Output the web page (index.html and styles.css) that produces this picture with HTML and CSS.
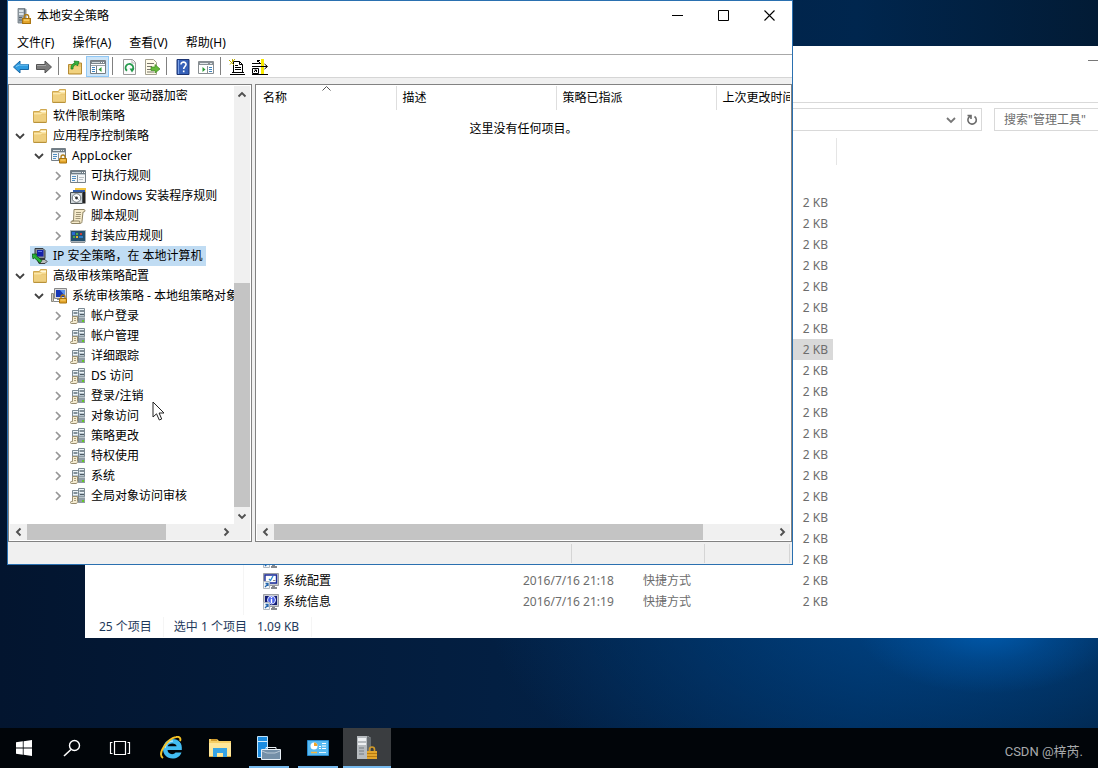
FILE: index.html
```html
<!DOCTYPE html>
<html lang="zh-CN">
<head>
<meta charset="utf-8">
<meta name="viewport" content="width=device-width, initial-scale=1">
<title>本地安全策略</title>
<link rel="stylesheet" href="styles.css">
</head>
<body>
<svg class="sprite" aria-hidden="true">
  <symbol id="folder" viewBox="0 0 16 16">
    <path d="M1.500 3.500h6l1-2h6v12.500h-13z" fill="#ecca78" stroke="#cfa850"/>
    <path d="M9 2.500h5v1.500H8z" fill="#fff8dc"/>
    <path d="M2 5h7l1-1h4v1.500h-4l-1 1H2z" fill="#fbe7a8"/>
    <path d="M2 7h12v6.500H2z" fill="#efd080"/>
    <path d="M1.500 14.500h13" stroke="#b8923a"/>
  </symbol>
  <symbol id="lock" viewBox="0 0 8 9">
    <path d="M2 4V2.500a2 2 0 0 1 4 0V4" fill="none" stroke="#b07c16" stroke-width="1.300"/>
    <path d="M.5 4h7v4.500h-7z" fill="#e3a52c" stroke="#a8720c"/>
    <path d="M1.500 5.500h5" stroke="#ffd873"/>
  </symbol>
  <symbol id="tower-lock" viewBox="0 0 16 16">
    <path d="M2 .5h7l1 1V15H2z" fill="#9aa4ac" stroke="#6e7880" stroke-width=".8"/>
    <path d="M3 2h4.500v2H3zM3 5h4.500v2H3z" fill="#dbe3e8"/>
    <path d="M3 9.500h3M3 12h3" stroke="#58636c"/>
    <path d="M8.500 1v14" stroke="#68727a"/>
    <use href="#lock" x="6" y="6" width="9" height="10"/>
  </symbol>
  <symbol id="panel" viewBox="0 0 16 16">
    <path d="M.5 2.500h15v12H.5z" fill="#f4f6f7" stroke="#757f86"/>
    <path d="M1 3h14v3H1z" fill="#6f7c86"/>
    <path d="M2 4.500h9" stroke="#cbd4da"/><path d="M12 4.500h1M14 4.500h1" stroke="#fff"/>
    <path d="M1 6.500h14" stroke="#c2cbd1"/>
    <path d="M2 8.500h4M2 10.500h4M2 12.500h3" stroke="#4f8fc5"/>
    <path d="M7.500 7v7" stroke="#88939b"/>
    <path d="M9 9.500h5M9 11.500h4" stroke="#b9c0c5"/>
  </symbol>
  <symbol id="panel-lock" viewBox="0 0 16 16">
    <path d="M.5.500h14v12H.5z" fill="#f4f6f7" stroke="#757f86"/>
    <path d="M1 1h13v3H1z" fill="#6f7c86"/>
    <path d="M2 2.500h7M10 2.500h1M12 2.500h1" stroke="#dfe5e9"/>
    <path d="M1 4.500h13" stroke="#c2cbd1"/>
    <path d="M2 6.500h4M2 8.500h4M2 10.500h3" stroke="#4f8fc5"/>
    <path d="M7.500 5v7" stroke="#88939b"/>
    <use href="#lock" x="8" y="6" width="8" height="10"/>
  </symbol>
  <symbol id="installer" viewBox="0 0 16 16">
    <path d="M5 0h11v4H5z" fill="#f3c53b"/><path d="M3 2h12v3H3z" fill="#2f59a8"/>
    <path d="M.5 4.500h12v11H.5z" fill="#cfd5d9" stroke="#4c5358"/>
    <path d="M13 4h2.500v11.500H13z" fill="#222"/>
    <circle cx="6.500" cy="10" r="4.300" fill="#fff" stroke="#6f777c"/>
    <path d="M6.500 10 3.500 7.500M6.500 10l3 2.500" stroke="#a7b5bd"/>
    <circle cx="6.500" cy="10" r="1.400" fill="#333"/>
  </symbol>
  <symbol id="script" viewBox="0 0 16 16">
    <path d="M4 1.500h10c1 0 1.500 2 0 2.500h-1l-1 9.500c0 1.500-1 2-2 2H2c-1.500 0-1.500-2.500 0-2.500h1.500z" fill="#f6ebcb" stroke="#8f8465"/>
    <path d="M6 4.500h5M6 6.500h5M5.500 8.500h5M5.500 10.500h5" stroke="#a09577"/>
    <path d="M2 13h7.500l.5 2" fill="none" stroke="#8f8465"/>
  </symbol>
  <symbol id="packaged" viewBox="0 0 16 16">
    <path d="M.5 2.500h15v11H.5z" fill="#24506e" stroke="#a9b2b8"/>
    <path d="M2 4h3v3H2z" fill="#276bd1"/><path d="M6 5h2v2H6z" fill="#45ad4b"/><path d="M10 5h2v2h-2z" fill="#c8403a"/>
    <path d="M3 8h2v2H3z" fill="#43a94c"/><path d="M6 8h2v2H6z" fill="#e3b62d"/><path d="M9 8h4v2H9z" fill="#2c79c5"/>
    <path d="M1 14.500h14" stroke="#858e94"/>
  </symbol>
  <symbol id="ipsec" viewBox="0 0 16 16">
    <path d="M3 .5h8l2 2v8H4L3 9z" fill="#8b8f94" stroke="#34383c"/>
    <path d="M5 2h6.500v6.500H5z" fill="#1420a8"/><path d="M6 3.500h4" stroke="#5f76e8"/>
    <path d="M5 11.500h8l2 2-2 2H7z" fill="#b9bcbe" stroke="#393c3e"/>
    <path d="M0 6h5L4 7.500l6 5-2 2.500-5.500-5L1 11z" fill="#26b336" stroke="#064c12" stroke-width=".7"/>
  </symbol>
  <symbol id="audit-root" viewBox="0 0 16 16">
    <path d="M.5 5.500h2v8h-2z" fill="#d0cdc2" stroke="#8b897f"/><path d="M3.500.5h12v10h-12z" fill="#dadada" stroke="#898989"/>
    <path d="M5 2h9v7H5z" fill="#1638b7"/><path d="M9 2h5v6z" fill="#5b92ec"/>
    <path d="M6 11.500h4M3 13.500h6" stroke="#85898c"/>
    <use href="#lock" x="8" y="6" width="8" height="10"/>
  </symbol>
  <symbol id="servers" viewBox="0 0 16 16">
    <path d="M2.500 2.500h6v9h-6z" fill="#b6c4cd" stroke="#7c8a93"/>
    <path d="M8.500.500h6v14h-6z" fill="#b6c4cd" stroke="#7c8a93"/>
    <path d="M3 3.500h5M9 1.500h5M9 4.500h5M3 6.500h5" stroke="#eef5f8"/>
    <path d="M4 5h3M10 3h4M10 6.500h4" stroke="#4d5a63"/>
    <path d="M9 8h6v7H9z" fill="#8f9ca4"/>
    <path d="M9 9.500h6" stroke="#b9c4ca"/>
    <path d="M2.500 8.500h5v5c0 1.300-.6 2-1.500 2H1.200c-1 0-1-2 0-2h1.300z" fill="#f5ecd2" stroke="#998e70"/>
    <path d="M4 10.500h2M4 12.500h2" stroke="#a89d7d"/>
    <path d="M12 12h2v2h-2z" fill="#65c928"/>
  </symbol>
  <symbol id="tri-down" viewBox="0 0 10 10"><path d="m1 3 4 4 4-4" fill="none" stroke="#404040" stroke-width="1.800"/></symbol>
  <symbol id="tri-right" viewBox="0 0 10 10"><path d="m3 1 4 4-4 4" fill="none" stroke="#969696" stroke-width="1.700"/></symbol>
  <symbol id="bar-arrow" viewBox="0 0 10 10"><path d="M6.500 1.500 3 5l3.500 3.500" fill="none" stroke="#505050" stroke-width="1.900"/></symbol>
  <symbol id="msconfig" viewBox="0 0 16 16">
    <path d="M.5.5h15v12H.5z" fill="#c9cbd0" stroke="#9b9da3"/><path d="M2 2h11.500v8H2z" fill="#fff" stroke="#1a2b9a" stroke-width="1.400"/>
    <path d="m6 6 1.500 1.500L10 3" fill="none" stroke="#2e8bd2" stroke-width="1.300"/><path d="M10 7.500h2.500" stroke="#888"/>
    <path d="M9 13h3v1h2v2H8v-2h1z" fill="#85878c"/>
    <path d="M.5 8.500h6v7h-6z" fill="#f3f6f9" stroke="#b1b8bf"/><path d="m2 14 3-3M2.500 10.500H5V13" fill="none" stroke="#2466ad" stroke-width="1.300"/>
  </symbol>
  <symbol id="msinfo" viewBox="0 0 16 16">
    <path d="M.5.5h15v12H.5z" fill="#c9cbd0" stroke="#9b9da3"/><path d="M2 2h12v9H2z" fill="#111b73"/>
    <circle cx="8.500" cy="6" r="4" fill="#4d64ea" stroke="#dfe5ff"/><path d="M8.500 5v4M8.500 3v1.200" stroke="#fff" stroke-width="1.400"/>
    <path d="M9 13h3v1h2v2H8v-2h1z" fill="#85878c"/>
    <path d="M.5 8.500h6v7h-6z" fill="#f3f6f9" stroke="#b1b8bf"/><path d="m2 14 3-3M2.500 10.500H5V13" fill="none" stroke="#2466ad" stroke-width="1.300"/>
  </symbol>
</svg>

<div class="desktop">
  <main class="workspace">

    <section class="explorer" aria-label="管理工具">
      <header class="explorer-title">
        <button class="explorer-min" type="button" aria-label="最小化"><svg width="10" height="10" viewBox="0 0 10 10"><path d="M0 5.500h10" stroke="#777"/></svg></button>
      </header>
      <div class="address-row">
        <div class="address-box">
          <button class="address-btn" type="button" aria-label="历史记录"><svg width="10" height="10" viewBox="0 0 10 10"><path d="m1 3 4 4 4-4" fill="none" stroke="#777" stroke-width="1.800"/></svg></button>
          <button class="address-btn refresh" type="button" aria-label="刷新"><svg width="12" height="12" viewBox="0 0 12 12"><path d="M4 2.300a4.200 4.200 0 1 0 4.500.2M1.500 1.500h3.500V5" fill="none" stroke="#6b6b6b" stroke-width="1.600"/></svg></button>
        </div>
        <input class="search" type="text" aria-label="搜索" placeholder="搜索&quot;管理工具&quot;">
      </div>
      <div class="explorer-body">
        <div class="nav-pane"></div>
        <div class="file-list">
          <div class="file-head"></div>
          <table class="files">
            <colgroup><col class="c-name"><col class="c-date"><col class="c-type"><col class="c-size"></colgroup>
            <tbody>
              <tr><td></td><td></td><td></td><td>2 KB</td></tr>
              <tr><td></td><td></td><td></td><td>2 KB</td></tr>
              <tr><td></td><td></td><td></td><td>2 KB</td></tr>
              <tr><td></td><td></td><td></td><td>2 KB</td></tr>
              <tr><td></td><td></td><td></td><td>2 KB</td></tr>
              <tr><td></td><td></td><td></td><td>2 KB</td></tr>
              <tr><td></td><td></td><td></td><td>2 KB</td></tr>
              <tr class="picked"><td></td><td></td><td></td><td>2 KB</td></tr>
              <tr><td></td><td></td><td></td><td>2 KB</td></tr>
              <tr><td></td><td></td><td></td><td>2 KB</td></tr>
              <tr><td></td><td></td><td></td><td>2 KB</td></tr>
              <tr><td></td><td></td><td></td><td>2 KB</td></tr>
              <tr><td></td><td></td><td></td><td>2 KB</td></tr>
              <tr><td></td><td></td><td></td><td>2 KB</td></tr>
              <tr><td></td><td></td><td></td><td>2 KB</td></tr>
              <tr><td></td><td></td><td></td><td>2 KB</td></tr>
              <tr><td></td><td></td><td></td><td>2 KB</td></tr>
              <tr><td><span class="file"><svg class="i16"><use href="#msinfo"/></svg></span></td><td></td><td></td><td>2 KB</td></tr>
              <tr><td><span class="file"><svg class="i16"><use href="#msconfig"/></svg>系统配置</span></td><td>2016/7/16 21:18</td><td>快捷方式</td><td>2 KB</td></tr>
              <tr><td><span class="file"><svg class="i16"><use href="#msinfo"/></svg>系统信息</span></td><td>2016/7/16 21:19</td><td>快捷方式</td><td>2 KB</td></tr>
              <tr><td><span class="file"><svg class="i16" viewBox="0 0 16 16"><circle cx="8" cy="7.500" r="7.500" fill="#8b8b8b"/></svg></span></td><td></td><td></td><td></td></tr>
            </tbody>
          </table>
        </div>
      </div>
      <footer class="explorer-status"><span>25 个项目</span><span class="picked-info">选中 1 个项目</span><span class="picked-size">1.09 KB</span></footer>
    </section>

    <section class="policy" aria-label="本地安全策略">
      <header class="titlebar">
        <svg class="i16"><use href="#tower-lock"/></svg>
        <h1 class="title">本地安全策略</h1>
        <button class="cap" type="button" aria-label="最小化"><svg width="11" height="11" viewBox="0 0 11 11"><path d="M0 5.500h11" stroke="#000"/></svg></button>
        <button class="cap" type="button" aria-label="最大化"><svg width="11" height="11" viewBox="0 0 11 11"><path d="M.5.500h10v10H.5z" fill="none" stroke="#000"/></svg></button>
        <button class="cap" type="button" aria-label="关闭"><svg width="11" height="11" viewBox="0 0 11 11"><path d="m.5.500 10 10M10.500.500l-10 10" stroke="#000" stroke-width="1.100"/></svg></button>
      </header>
      <nav class="menubar">
        <button type="button">文件(F)</button><button type="button">操作(A)</button><button type="button">查看(V)</button><button type="button">帮助(H)</button>
      </nav>
      <div class="toolbar">
        <button class="tool" type="button" aria-label="后退"><svg width="16" height="14" viewBox="0 0 16 14"><path d="M.5 7 7 1v3.500h8.500v5H7V13z" fill="#2f9be0" stroke="#1767a5"/><path d="M3 6.500 6.500 5H15" fill="none" stroke="#7fcbf5"/></svg></button>
        <button class="tool" type="button" aria-label="前进"><svg width="16" height="14" viewBox="0 0 16 14"><path d="M15.500 7 9 1v3.500H.5v5H9V13z" fill="#7b7b7b" stroke="#525252"/><path d="M1 5.500h9" stroke="#a4a4a4"/></svg></button>
        <span class="tool-sep"></span>
        <button class="tool" type="button" aria-label="上一级"><svg width="16" height="16" viewBox="0 0 16 16"><path d="M1.500 5.500h5l1-1.500h7v11h-13z" fill="#e9c56c" stroke="#b58a33"/><path d="M2 8h12v6H2z" fill="#f1d27f"/><path d="M4 10c0-4 1-5 4-6L7 2l5 .5L10.500 7 9 5.500C6.500 6 6 8 6 10z" fill="#35b33c" stroke="#14751c" stroke-width=".7"/></svg></button>
        <button class="tool on" type="button" aria-label="显示控制台树"><svg width="16" height="16" viewBox="0 0 16 16"><path d="M.5 1.500h15v13H.5z" fill="#fff" stroke="#777d82"/><path d="M1 2h14v3H1z" fill="#7d868c"/><path d="M2 3.500h8" stroke="#d4dadd"/><path d="M11 3.500h1M13 3.500h1" stroke="#fff"/><path d="M1 6.500h14" stroke="#9ba2a7"/><path d="M2 8.500h3M2 10.500h3M2 12.500h3" stroke="#3d83c0"/><path d="M6.500 7v7" stroke="#777d82"/><path d="M11.500 8v5L8.500 10.500z" fill="#299b34"/></svg></button>
        <span class="tool-sep"></span>
        <button class="tool" type="button" aria-label="刷新"><svg width="16" height="16" viewBox="0 0 16 16"><path d="M2.500.5h9l3 3v12h-12z" fill="#fcfcfc" stroke="#9b9b9b"/><path d="M11 1v3h3" fill="none" stroke="#b5b5b5"/><path d="M6 11.800A3.800 3.800 0 1 1 11.500 11" fill="none" stroke="#249a4c" stroke-width="1.900"/><path d="m8.500 9.500 5 0-2.500 4z" fill="#249a4c"/></svg></button>
        <button class="tool" type="button" aria-label="导出列表"><svg width="16" height="16" viewBox="0 0 16 16"><path d="M1.500.5h8l3 3v12h-11z" fill="#fffbe9" stroke="#a2a08f"/><path d="M3 4.500h7M3 7.500h5M3 10.500h4M3 13h7" stroke="#77756b"/><path d="M7 8h4V5.500L16 10l-5 4v-2.500H7z" fill="#65b93a" stroke="#3c8b20" stroke-width=".7"/></svg></button>
        <span class="tool-sep"></span>
        <button class="tool" type="button" aria-label="帮助"><svg width="16" height="16" viewBox="0 0 16 16"><path d="M2 .5h12v15H2z" fill="#3560b8" stroke="#1c3472"/><path d="M3.500 1v14" stroke="#7aa0e6"/><path d="M6 5.500c0-3.500 5.500-3 5 .2C10.700 7.500 8.700 7.700 8.700 10M8.700 11.500v1.700" fill="none" stroke="#fff" stroke-width="1.600"/></svg></button>
        <button class="tool" type="button" aria-label="显示操作窗格"><svg width="16" height="16" viewBox="0 0 16 16"><path d="M.5 2.500h15v12H.5z" fill="#fff" stroke="#888e92"/><path d="M1 3h14v3H1z" fill="#899196"/><path d="M2 4.500h8M12 4.500h2" stroke="#e2e6e8"/><path d="M9.500 7v7" stroke="#888e92"/><path d="M11 8.500h3M11 10.500h3M11 12.500h3" stroke="#4386bd"/><path d="M4.500 8v5L7.500 10.500z" fill="#299b34"/></svg></button>
        <span class="tool-sep"></span>
        <button class="tool" type="button" aria-label="创建 IP 安全策略"><svg width="16" height="16" viewBox="0 0 16 16"><path d="M4.500 2.500h6l3 3v8h-9z" fill="#fff" stroke="#000"/><path d="M10.500 2.500v3h3M6 6.500h3M6 8.500h6M6 10.500h6M3 13.500h12M1 15.500h15" fill="none" stroke="#000"/><path d="m0 1 5 5M6 0 1 5.500M3.500 0v3" stroke="#b9a900"/></svg></button>
        <button class="tool" type="button" aria-label="管理 IP 筛选器"><svg width="16" height="16" viewBox="0 0 16 16"><path d="M9 0h3v15H9z" fill="#f8ea00"/><path d="M0 4.500h8M0 7.500h15M0 15.500h16M12.500 5l3 2.500-3 2.500" fill="none" stroke="#000"/><path d="M.5 9.500h6v5h-6z" fill="#fff" stroke="#000"/><path d="m2 13 2-2M2.500 11h2v2M5 1.500h3M5.500 1v2M6 2l3 3" fill="none" stroke="#000"/></svg></button>
      </div>

      <div class="panes">
        <div class="pane tree-pane">
          <div class="tree-view">
            <ul class="tree">
              <li>
                <ul>
                  <li><div class="row"><span class="tw"></span><span class="node"><svg class="i16"><use href="#folder"/></svg>BitLocker 驱动器加密</span></div></li>
                </ul>
              </li>
              <li><div class="row"><span class="tw"></span><span class="node"><svg class="i16"><use href="#folder"/></svg>软件限制策略</span></div></li>
              <li>
                <div class="row"><button class="tw" type="button" aria-label="折叠"><svg class="i10"><use href="#tri-down"/></svg></button><span class="node"><svg class="i16"><use href="#folder"/></svg>应用程序控制策略</span></div>
                <ul>
                  <li>
                    <div class="row"><button class="tw" type="button" aria-label="折叠"><svg class="i10"><use href="#tri-down"/></svg></button><span class="node"><svg class="i16"><use href="#panel-lock"/></svg>AppLocker</span></div>
                    <ul>
                      <li><div class="row"><button class="tw" type="button" aria-label="展开"><svg class="i10"><use href="#tri-right"/></svg></button><span class="node"><svg class="i16"><use href="#panel"/></svg>可执行规则</span></div></li>
                      <li><div class="row"><button class="tw" type="button" aria-label="展开"><svg class="i10"><use href="#tri-right"/></svg></button><span class="node"><svg class="i16"><use href="#installer"/></svg>Windows 安装程序规则</span></div></li>
                      <li><div class="row"><button class="tw" type="button" aria-label="展开"><svg class="i10"><use href="#tri-right"/></svg></button><span class="node"><svg class="i16"><use href="#script"/></svg>脚本规则</span></div></li>
                      <li><div class="row"><button class="tw" type="button" aria-label="展开"><svg class="i10"><use href="#tri-right"/></svg></button><span class="node"><svg class="i16"><use href="#packaged"/></svg>封装应用规则</span></div></li>
                    </ul>
                  </li>
                </ul>
              </li>
              <li><div class="row"><span class="tw"></span><span class="node selected"><svg class="i16"><use href="#ipsec"/></svg>IP 安全策略，在 本地计算机</span></div></li>
              <li>
                <div class="row"><button class="tw" type="button" aria-label="折叠"><svg class="i10"><use href="#tri-down"/></svg></button><span class="node"><svg class="i16"><use href="#folder"/></svg>高级审核策略配置</span></div>
                <ul>
                  <li>
                    <div class="row"><button class="tw" type="button" aria-label="折叠"><svg class="i10"><use href="#tri-down"/></svg></button><span class="node"><svg class="i16"><use href="#audit-root"/></svg>系统审核策略 - 本地组策略对象</span></div>
                    <ul>
                      <li><div class="row"><button class="tw" type="button" aria-label="展开"><svg class="i10"><use href="#tri-right"/></svg></button><span class="node"><svg class="i16"><use href="#servers"/></svg>帐户登录</span></div></li>
                      <li><div class="row"><button class="tw" type="button" aria-label="展开"><svg class="i10"><use href="#tri-right"/></svg></button><span class="node"><svg class="i16"><use href="#servers"/></svg>帐户管理</span></div></li>
                      <li><div class="row"><button class="tw" type="button" aria-label="展开"><svg class="i10"><use href="#tri-right"/></svg></button><span class="node"><svg class="i16"><use href="#servers"/></svg>详细跟踪</span></div></li>
                      <li><div class="row"><button class="tw" type="button" aria-label="展开"><svg class="i10"><use href="#tri-right"/></svg></button><span class="node"><svg class="i16"><use href="#servers"/></svg>DS 访问</span></div></li>
                      <li><div class="row"><button class="tw" type="button" aria-label="展开"><svg class="i10"><use href="#tri-right"/></svg></button><span class="node"><svg class="i16"><use href="#servers"/></svg>登录/注销</span></div></li>
                      <li><div class="row"><button class="tw" type="button" aria-label="展开"><svg class="i10"><use href="#tri-right"/></svg></button><span class="node"><svg class="i16"><use href="#servers"/></svg>对象访问</span></div></li>
                      <li><div class="row"><button class="tw" type="button" aria-label="展开"><svg class="i10"><use href="#tri-right"/></svg></button><span class="node"><svg class="i16"><use href="#servers"/></svg>策略更改</span></div></li>
                      <li><div class="row"><button class="tw" type="button" aria-label="展开"><svg class="i10"><use href="#tri-right"/></svg></button><span class="node"><svg class="i16"><use href="#servers"/></svg>特权使用</span></div></li>
                      <li><div class="row"><button class="tw" type="button" aria-label="展开"><svg class="i10"><use href="#tri-right"/></svg></button><span class="node"><svg class="i16"><use href="#servers"/></svg>系统</span></div></li>
                      <li><div class="row"><button class="tw" type="button" aria-label="展开"><svg class="i10"><use href="#tri-right"/></svg></button><span class="node"><svg class="i16"><use href="#servers"/></svg>全局对象访问审核</span></div></li>
                    </ul>
                  </li>
                </ul>
              </li>
            </ul>
          </div>
          <div class="bar vertical">
            <button type="button" class="bar-btn" aria-label="向上滚动"><svg class="i10 turn-up"><use href="#bar-arrow"/></svg></button>
            <div class="track"><div class="thumb thumb-tree-y"></div></div>
            <button type="button" class="bar-btn" aria-label="向下滚动"><svg class="i10 turn-down"><use href="#bar-arrow"/></svg></button>
          </div>
          <div class="bar">
            <button type="button" class="bar-btn" aria-label="向左滚动"><svg class="i10"><use href="#bar-arrow"/></svg></button>
            <div class="track"><div class="thumb thumb-tree-x"></div></div>
            <button type="button" class="bar-btn" aria-label="向右滚动"><svg class="i10 turn-right"><use href="#bar-arrow"/></svg></button>
          </div>
          <div class="bar-corner"></div>
        </div>

        <div class="pane list-pane">
          <table class="policies">
            <colgroup><col class="p-name"><col class="p-wide"><col class="p-wide"><col></colgroup>
            <thead><tr>
              <th>名称<svg class="sort" width="9" height="5" viewBox="0 0 9 5"><path d="M.5 4.500l4-4 4 4" fill="none" stroke="#555"/></svg></th>
              <th>描述</th><th>策略已指派</th><th>上次更改时间</th>
            </tr></thead>
            <tbody><tr><td colspan="4">这里没有任何项目。</td></tr></tbody>
          </table>
          <div class="bar">
            <button type="button" class="bar-btn" aria-label="向左滚动"><svg class="i10"><use href="#bar-arrow"/></svg></button>
            <div class="track"><div class="thumb thumb-list-x"></div></div>
            <button type="button" class="bar-btn" aria-label="向右滚动"><svg class="i10 turn-right"><use href="#bar-arrow"/></svg></button>
          </div>
        </div>
      </div>
      <footer class="policy-status"><span></span><span></span><span></span></footer>
    </section>

    <svg class="pointer" width="13" height="20" viewBox="0 0 13 20" aria-hidden="true"><path d="M1 1v15l3.500-3.200L7.300 19l2.400-1-2.600-6H12z" fill="#fff" stroke="#222"/></svg>
  </main>

  <footer class="taskbar">
    <button class="task" type="button" aria-label="开始"><svg width="16" height="16" viewBox="0 0 16 16"><path d="M0 2.300 6.800 1.300v6.300H0zM7.600 1.200 16 0v7.600H7.600zM0 8.400h6.800v6.300L0 13.700zM7.600 8.400H16V16l-8.400-1.200z" fill="#fff"/></svg></button>
    <button class="task" type="button" aria-label="搜索"><svg width="18" height="18" viewBox="0 0 18 18"><circle cx="11.500" cy="6.500" r="5" fill="none" stroke="#fff" stroke-width="1.400"/><path d="m8 10.500-7 6.500" stroke="#fff" stroke-width="1.600"/></svg></button>
    <button class="task" type="button" aria-label="任务视图"><svg width="22" height="16" viewBox="0 0 22 16"><path d="M5.500 1.500h11v13h-11zM3.500 2.500h-2v11h2M18.500 2.500h2v11h-2" fill="none" stroke="#fff" stroke-width="1.200"/></svg></button>
    <button class="task app" type="button" aria-label="Internet Explorer"><svg width="24" height="24" viewBox="0 0 24 24"><path d="M8.500 14h14.300c.8-7-3-11-9.300-11A9.700 9.700 0 0 0 4 13c0 5.500 4 9.500 9.500 9.500 4.300 0 7.500-2 9-6h-6c-2 2.800-7.800 2-8-2.500zm.2-3.800c.9-3.700 8.400-3.700 8.900 0z" fill="#43bdf2"/><path d="M6 12c1-5 4-7 8-7" fill="none" stroke="#a9e4ff" stroke-width="1.300"/><path d="M4 22C-2 18 8 3 17 1c4-1 5 2 4 4" fill="none" stroke="#f4c226" stroke-width="1.900"/></svg></button>
    <button class="task app" type="button" aria-label="文件资源管理器"><svg width="22" height="20" viewBox="0 0 22 20"><path d="M0 1h8l2 2h12v16H0z" fill="#f6cf66"/><path d="M2 1h6v2H2z" fill="#cf9a2d"/><path d="M0 5h22v13H0z" fill="#ffe79a"/><path d="M4 10h14v9h-4v-4H8v4H4z" fill="#37a4e4"/><path d="M0 18h4v1H0zM18 18h4v1h-4z" fill="#d9a93c"/></svg></button>
    <button class="task app open" type="button" aria-label="服务器管理器"><svg width="24" height="24" viewBox="0 0 24 24"><path d="M.5.5h10v21H.5z" fill="#1b8ce0" stroke="#bfe3fb"/><path d="M1 5.500h9" stroke="#d6eefc"/><path d="M4.500 13.500h19v10h-19z" fill="#7590a8" stroke="#e8eff5"/><path d="M9 13v-1.500h10V13" fill="none" stroke="#e8eff5"/><path d="m5 15 5 2h8l5-2" fill="none" stroke="#b9c8d5"/></svg></button>
    <button class="task app open" type="button" aria-label="控制面板"><svg width="22" height="16" viewBox="0 0 22 16"><path d="M.5.500h21v15H.5z" fill="#58baf2" stroke="#2588cd"/><circle cx="7" cy="6" r="3.500" fill="#fff"/><path d="M7 6V2.500A3.500 3.500 0 0 1 10.500 6z" fill="#f2a52a"/><path d="M12 6.500h2M12 8.500h2M15 3.500h4M15 6h4M15 8.500h4" stroke="#fff" stroke-width="1.200"/><path d="M4 12.500h6" stroke="#f5b740" stroke-width="1.500"/><path d="M12 12.500h7" stroke="#dff3ff"/></svg></button>
    <button class="task app open active" type="button" aria-label="本地安全策略"><svg width="22" height="24" viewBox="0 0 22 24"><path d="M1 0h11l3 2v20l-4 1H1z" fill="#b6bbbf"/><path d="M11 0l4 2v20l-4 1z" fill="#666c70"/><path d="M2 2h8v3H2zM2 7h8v2H2z" fill="#edf0f2"/><path d="M3 12h5M3 15h5M3 18h5" stroke="#747b80"/><path d="M13.500 15v-1.500a2.500 2.500 0 0 1 5 0V15" fill="none" stroke="#d29a28" stroke-width="1.600"/><path d="M11 15h10v8H11z" fill="#e2a52c"/><path d="M11 17.500h10M11 20.500h10" stroke="#b87a10"/></svg></button>
    <span class="mark">CSDN @梓芮.</span>
  </footer>
</div>
</body>
</html>
```
FILE: styles.css
```css
* { box-sizing: border-box; }

body {
  margin: 0;
  font: 12px/20px "Noto Sans", "Noto Sans CJK SC", sans-serif;
  color: #000;
}

button {
  display: flex;
  align-items: center;
  justify-content: center;
  margin: 0;
  padding: 0;
  border: 0;
  background: none;
  font: inherit;
  color: inherit;
}

svg { display: block; flex: none; }
ul { margin: 0; padding: 0; list-style: none; }
table { border-collapse: collapse; table-layout: fixed; }

.sprite { position: absolute; width: 0; height: 0; }
.i16 { width: 16px; height: 16px; }
.i10 { width: 10px; height: 10px; }

.desktop {
  display: flex;
  flex-direction: column;
  height: 100vh;
  overflow: hidden;
  background:
    radial-gradient(ellipse 130px 64px at 90% 82%, rgba(0, 92, 176, .9) 0%, rgba(0, 88, 170, .4) 50%, rgba(0, 84, 164, 0) 100%),
    radial-gradient(ellipse 460px 240px at 86% 78%, #004588 0%, rgba(0, 62, 124, .6) 50%, rgba(0, 50, 100, 0) 100%),
    linear-gradient(90deg, #03152f 0%, #031f42 45%, #00264e 78%, #021b35 100%);
}

.workspace { position: relative; flex: 1; min-height: 0; }

/* File explorer window */
.explorer {
  position: absolute;
  top: 46px;
  right: 0;
  bottom: 90px;
  left: 85px;
  display: flex;
  flex-direction: column;
  overflow: hidden;
  background: #fff;
}

.explorer-title {
  display: flex;
  justify-content: flex-end;
  align-items: flex-start;
  height: 57px;
  padding-top: 9px;
  border-bottom: 1px solid #d9d9d9;
}

.address-row { display: flex; gap: 12px; padding-top: 5px; }

.address-box {
  display: flex;
  flex: 1;
  justify-content: flex-end;
  height: 23px;
  border: 1px solid #d9d9d9;
}

.address-btn { width: 20px; }
.address-btn.refresh { border-left: 1px solid #d9d9d9; }

.search {
  width: 104px;
  height: 23px;
  padding: 0 0 0 9px;
  border: 1px solid #d9d9d9;
  border-right: 0;
  border-radius: 0;
  background: #fff;
  font: inherit;
}
.search::placeholder { color: #6d6d6d; opacity: 1; }

.explorer-body { display: flex; flex: 1; min-height: 0; overflow: hidden; }
.nav-pane { width: 159px; border-right: 1px solid #f5f5f5; }
.file-list { flex: 1; padding: 7px 0 0 13px; overflow: hidden; }
.file-head { width: 580px; height: 27px; margin-bottom: 27px; border-right: 1px solid #e5e5e5; }

.files { width: 576px; color: #6d6d6d; }
.files td { height: 21px; padding: 0 0 0 9px; white-space: nowrap; }
.files td:first-child { padding-left: 6px; color: #000; }
.files td:last-child { padding: 0 5px 0 0; text-align: right; }
.files .picked { background: #d9d9d9; }
.c-name { width: 257px; }
.c-date, .c-type { width: 120px; }
.c-size { width: 79px; }
.file { display: flex; align-items: center; gap: 4px; }

.explorer-status {
  display: flex;
  align-items: center;
  height: 23px;
  padding-left: 14px;
  color: #1e395b;
}
.picked-info { margin-left: 11px; padding-left: 10px; border-left: 1px solid #f5f5f5; }
.picked-size { margin-left: 10px; padding-right: 12px; border-right: 1px solid #f5f5f5; }

/* Local security policy window */
.policy {
  position: absolute;
  top: 0;
  right: 305px;
  bottom: 163px;
  left: 7px;
  display: flex;
  flex-direction: column;
  border: 1px solid #2a70b0;
  background: #f0f0f0;
}

.titlebar {
  display: flex;
  align-items: center;
  height: 29px;
  padding-left: 8px;
  background: #fff;
}
.title { flex: 1; margin: 0 0 0 5px; font-size: 12px; font-weight: 400; }
.cap { width: 46px; height: 29px; }

.menubar {
  display: flex;
  gap: 18px;
  height: 25px;
  padding: 2px 0 0 9px;
  border-bottom: 1px solid #a8a8a8;
  background: #fff;
}

.toolbar {
  display: flex;
  align-items: flex-end;
  height: 23px;
  padding-left: 1px;
  border-bottom: 1px solid #d5d5d5;
  background: #fff;
}
.tool { width: 23px; height: 21px; }
.tool.on { border: 1px solid #90c8f6; background: #cce4f7; }
.tool-sep { width: 1px; height: 18px; margin: 0 4px 2px 3px; background: #808080; }

.panes {
  display: grid;
  grid-template-columns: 244px 1fr;
  gap: 3px;
  flex: 1;
  min-height: 0;
  padding-top: 6px;
}

.pane {
  min-width: 0;
  min-height: 0;
  padding: 1px;
  border: 1px solid #828282;
  background: #fff;
}

.tree-pane { display: grid; grid-template: minmax(0, 1fr) 16px / minmax(0, 1fr) 16px; }
.list-pane { display: flex; flex-direction: column; justify-content: space-between; }

.tree-view { overflow: hidden; }
.tree ul { padding-left: 19px; }
.row { display: flex; height: 20px; white-space: nowrap; }
.tw { display: flex; flex: none; width: 20px; height: 20px; }
.node { display: flex; align-items: center; gap: 5px; padding: 0 3px 0 2px; }
.node.selected { background: #c0dcf3; }

.bar { display: flex; height: 16px; background: #f0f0f0; }
.bar.vertical { flex-direction: column; height: auto; }
.bar-btn { width: 17px; height: 16px; }
.vertical .bar-btn { width: 16px; height: 17px; }
.track { flex: 1; display: flex; min-height: 0; }
.vertical .track { flex-direction: column; justify-content: flex-end; }
.thumb { background: #c4c4c4; }
.thumb-tree-y { height: 55.5%; }
.thumb-tree-x { width: 73%; }
.thumb-list-x { width: 86%; }
.turn-up { transform: rotate(90deg); }
.turn-down { transform: rotate(270deg); }
.turn-right { transform: rotate(180deg); }
.bar-corner { background: #f0f0f0; }

.policies { width: 100%; }
.p-name { width: 139px; }
.p-wide { width: 160px; }
.policies th {
  position: relative;
  height: 24px;
  padding: 0 0 0 6px;
  border-right: 1px solid #dedede;
  overflow: hidden;
  font-weight: 400;
  text-align: left;
  white-space: nowrap;
}
.policies th:last-child { border-right: 0; }
.policies td { height: 38px; padding: 0; text-align: center; }
.sort { position: absolute; top: 0; left: calc(50% - 4px); }

.policy-status {
  display: grid;
  grid-template-columns: 1fr 133px 85px;
  height: 22px;
  padding: 2px 2px 1px 0;
}
.policy-status span { border-right: 1px solid #d5d5d5; }

.pointer { position: absolute; top: 401px; left: 152px; }

/* Taskbar */
.taskbar {
  display: flex;
  align-items: center;
  height: 40px;
  padding-right: 15px;
  background: #010509;
}
.task { width: 48px; height: 40px; }
.task.app { position: relative; margin-left: 1px; }
.task:nth-child(4) { margin-left: 3px; }
.task.open::after {
  content: "";
  position: absolute;
  right: 4px;
  bottom: 0;
  left: 4px;
  height: 2px;
  background: #76b9ed;
}
.task.active { background: #3a3d40; }
.task.active::after { right: 0; left: 0; }
.mark { margin: 8px 0 0 auto; font-family: Roboto, "Noto Sans CJK SC", sans-serif; font-size: 13px; color: #a8aaac; }
```
